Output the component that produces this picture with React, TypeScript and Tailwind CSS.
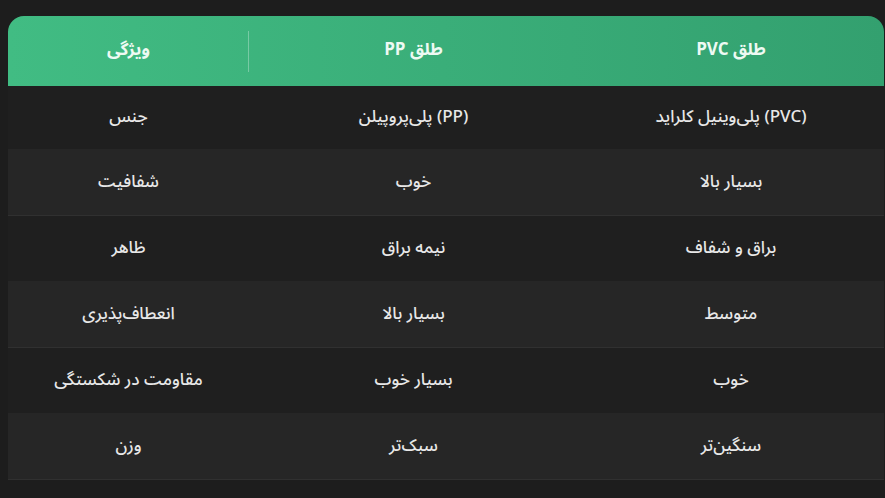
import React from "react";

const rows: [string, string, string][] = [
  ["(PVC) پلی‌وینیل کلراید", "(PP) پلی‌پروپیلن", "جنس"],
  ["بسیار بالا", "خوب", "شفافیت"],
  ["براق و شفاف", "نیمه براق", "ظاهر"],
  ["متوسط", "بسیار بالا", "انعطاف‌پذیری"],
  ["خوب", "بسیار خوب", "مقاومت در شکستگی"],
  ["سنگین‌تر", "سبک‌تر", "وزن"],
];

export default function App() {
  return (
    <div
      className="w-[885px] h-[498px] bg-[#1d1d1d] overflow-hidden pt-4 pl-2 pr-[1px]"
      style={{ fontFamily: '"Noto Sans Arabic", "DejaVu Sans", "Noto Sans", sans-serif' }}
    >
      <div dir="rtl" className="w-full">
        <div className="grid grid-cols-[306px_329px_1fr] h-[70px] rounded-t-[16px] bg-gradient-to-l from-[#33a06f] to-[#41bc83] text-[#eefaf3] text-[17px] font-bold">
          <div className="flex items-center justify-center">طلق PVC</div>
          <div className="flex items-center justify-center">طلق PP</div>
          <div className="flex items-center justify-center relative">
            <span className="absolute right-0 top-[15px] bottom-[14px] w-px bg-white/30" />
            ویژگی
          </div>
        </div>
        {rows.map((r, i) => (
          <div
            key={i}
            className={
              "grid grid-cols-[306px_329px_1fr] text-[#e8e8e8] text-[17px] font-medium border-b " +
              (i % 2 === 0
                ? "bg-[#1f1f1f] border-[#262626] " + (i === 0 ? "h-[64px]" : "h-[66px]")
                : "bg-[#262626] border-[#303030] h-[66px]")
            }
          >
            <div className="flex items-center justify-center">{r[0]}</div>
            <div className="flex items-center justify-center">{r[1]}</div>
            <div className="flex items-center justify-center">{r[2]}</div>
          </div>
        ))}
      </div>
    </div>
  );
}
